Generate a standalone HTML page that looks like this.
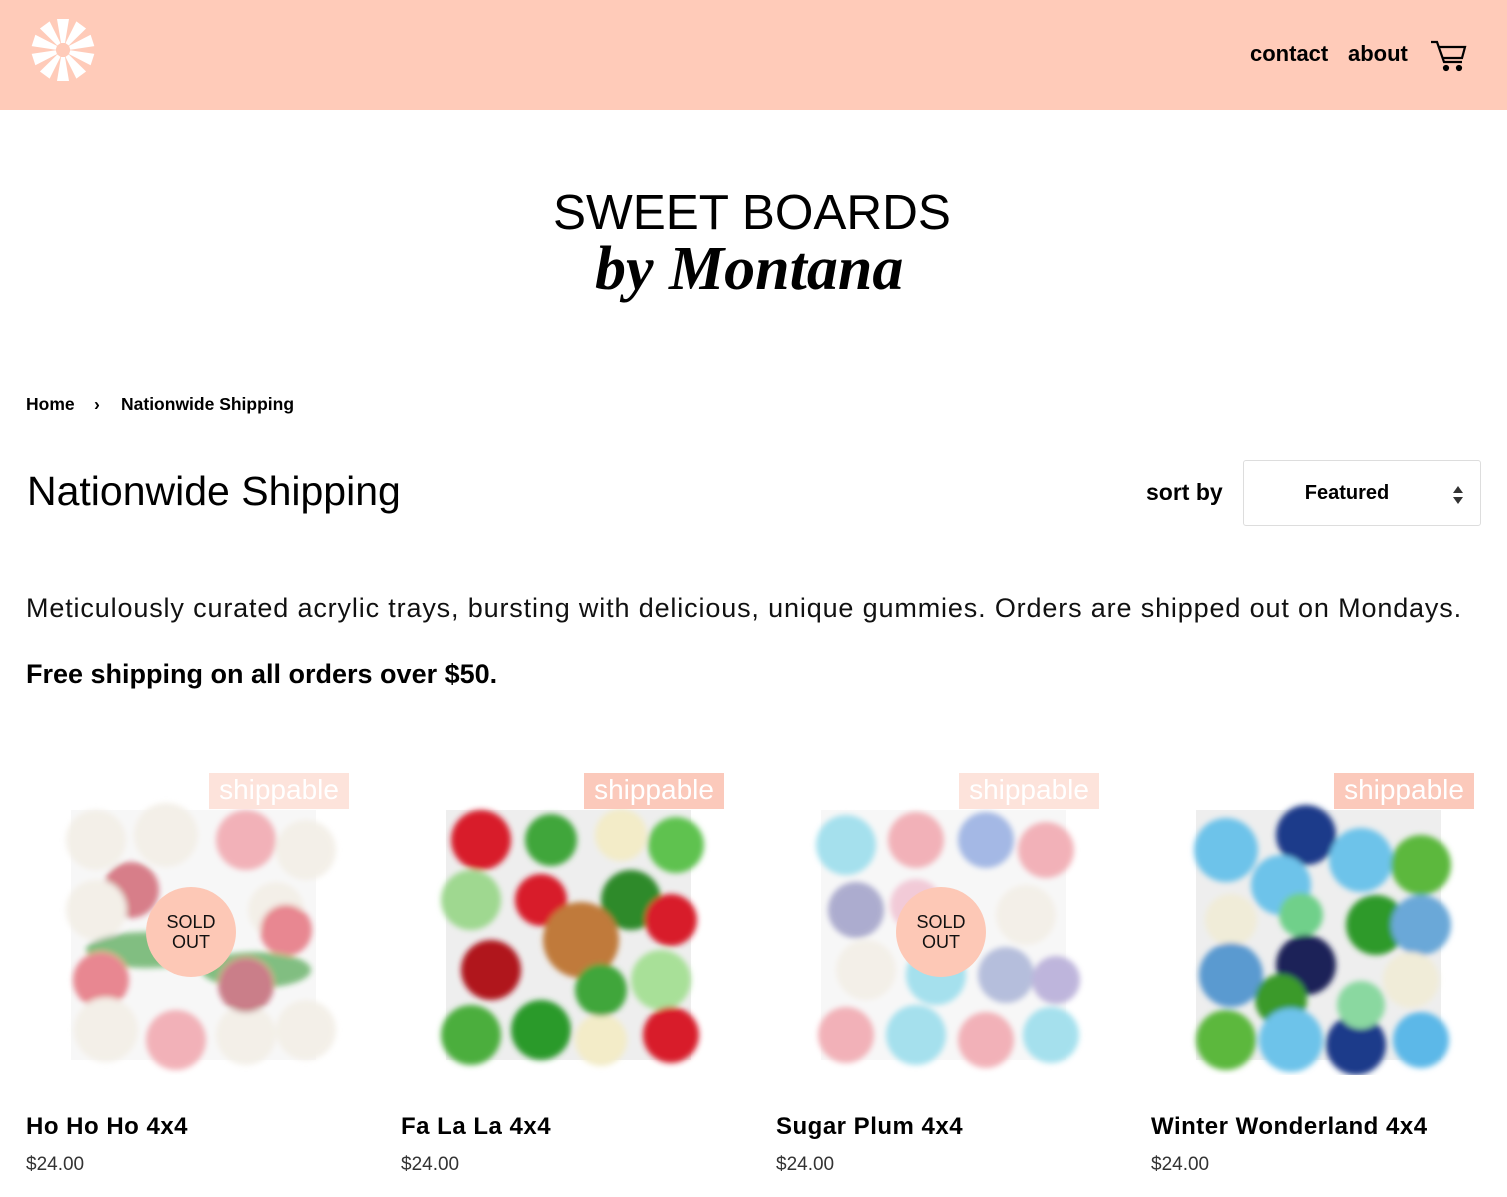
<!DOCTYPE html>
<html><head><meta charset="utf-8">
<style>
*{margin:0;padding:0;box-sizing:border-box}
body{width:1507px;height:1197px;overflow:hidden;background:#fff;font-family:"Liberation Sans",sans-serif;color:#000;position:relative}
.hdr{position:absolute;left:0;top:0;width:1507px;height:110px;background:#ffcbb9}
.nav{position:absolute;top:41px;font-weight:bold;font-size:22px}
.abs{position:absolute}
.crumb{top:394px;font-size:17.5px;font-weight:bold}
h1{position:absolute;left:27px;top:468px;font-weight:normal;font-size:41px;letter-spacing:0px}
.sel{position:absolute;left:1243px;top:460px;width:238px;height:66px;border:1px solid #ddd;border-radius:3px;font-weight:bold;font-size:20px;text-align:center;line-height:64px;padding-right:30px}
.desc{left:26px;top:593px;font-size:27px;letter-spacing:0.85px;color:#111;white-space:nowrap}
.free{left:26px;top:659px;font-size:27px;font-weight:bold;white-space:nowrap}
.prod{position:absolute;top:770px;width:340px;height:420px}
.ship{position:absolute;left:183px;top:3px;width:140px;height:36px;background:#fbc9bb;color:#fff;font-size:28px;line-height:34px;text-align:center}
.faded .ship{background:#fde3db}
.name{position:absolute;left:0;top:343px;font-size:24px;letter-spacing:0.5px;font-weight:bold;white-space:nowrap}
.price{position:absolute;left:0;top:384px;font-size:19px;color:#333}
.sold{position:absolute;left:120px;top:117px;width:90px;height:90px;border-radius:50%;background:#fdc8b6;font-size:18px;text-align:center;line-height:20px;padding-top:25px;color:#111}
svg.c{position:absolute;left:30px;top:20px}
</style></head><body>
<div class="hdr">
<svg class="abs" style="left:31px;top:18px" width="64" height="64" viewBox="-32 -32 64 64">
<g fill="#fff">
<polygon points="-2,-7 2,-7 6,-31 -6,-31"/>
<polygon points="-2,-7 2,-7 6,-31 -6,-31" transform="rotate(36)"/>
<polygon points="-2,-7 2,-7 6,-31 -6,-31" transform="rotate(72)"/>
<polygon points="-2,-7 2,-7 6,-31 -6,-31" transform="rotate(108)"/>
<polygon points="-2,-7 2,-7 6,-31 -6,-31" transform="rotate(144)"/>
<polygon points="-2,-7 2,-7 6,-31 -6,-31" transform="rotate(180)"/>
<polygon points="-2,-7 2,-7 6,-31 -6,-31" transform="rotate(216)"/>
<polygon points="-2,-7 2,-7 6,-31 -6,-31" transform="rotate(252)"/>
<polygon points="-2,-7 2,-7 6,-31 -6,-31" transform="rotate(288)"/>
<polygon points="-2,-7 2,-7 6,-31 -6,-31" transform="rotate(324)"/>
</g></svg>
<div class="nav" style="left:1250px">contact</div>
<div class="nav" style="left:1348px">about</div>
<svg class="abs" style="left:1430px;top:40px" width="38" height="32" viewBox="0 0 38 32" fill="none" stroke="#000" stroke-width="2.2">
<path d="M1 2h6l7 20h18"/><path d="M9 7h26l-3 11H13"/><circle cx="16" cy="28" r="2" fill="#000"/><circle cx="29" cy="28" r="2" fill="#000"/>
</svg>
</div>

<div class="abs" style="left:553px;top:184px;font-size:49.5px;white-space:nowrap">SWEET BOARDS</div>
<div class="abs" style="left:595px;top:234px;font-family:'Liberation Serif',serif;font-style:italic;font-weight:bold;font-size:62px;white-space:nowrap">by Montana</div>

<div class="abs crumb" style="left:26px">Home</div>
<div class="abs crumb" style="left:94px">›</div>
<div class="abs crumb" style="left:121px">Nationwide Shipping</div>

<h1>Nationwide Shipping</h1>
<div class="abs" style="left:1146px;top:479px;font-size:23px;font-weight:bold">sort by</div>
<div class="sel">Featured
<svg class="abs" style="left:207px;top:24px" width="14" height="20" viewBox="0 0 14 20"><path d="M7 1l5 7H2z M2 12h10l-5 7z" fill="#333"/></svg>
</div>

<div class="abs desc">Meticulously curated acrylic trays, bursting with delicious, unique gummies. Orders are shipped out on Mondays.</div>
<div class="abs free">Free shipping on all orders over $50.</div>

<defs></defs>
<!-- product 1 -->
<div class="prod faded" style="left:26px">
<svg class="c" width="290" height="285" viewBox="0 0 290 285" style="opacity:.55">
<defs><filter id="b"><feGaussianBlur stdDeviation="3"/></filter></defs>
<rect x="15" y="20" width="245" height="250" fill="#f2f2f2"/>
<g filter="url(#b)">
<circle cx="40" cy="50" r="30" fill="#eae3d6"/><circle cx="110" cy="45" r="32" fill="#eae3d6"/><circle cx="190" cy="50" r="30" fill="#e8737f"/><circle cx="250" cy="60" r="30" fill="#eae3d6"/>
<circle cx="75" cy="100" r="28" fill="#b8142a"/><circle cx="40" cy="120" r="30" fill="#eae3d6"/><circle cx="220" cy="120" r="28" fill="#eae3d6"/><circle cx="230" cy="140" r="26" fill="#d62839"/>
<ellipse cx="90" cy="160" rx="60" ry="18" fill="#1d8a1d"/><ellipse cx="200" cy="180" rx="55" ry="18" fill="#1d8a1d"/><circle cx="45" cy="190" r="28" fill="#d62839"/>
<circle cx="50" cy="240" r="32" fill="#eae3d6"/><circle cx="120" cy="250" r="30" fill="#e8737f"/><circle cx="190" cy="245" r="30" fill="#eae3d6"/><circle cx="250" cy="240" r="30" fill="#eae3d6"/><circle cx="190" cy="195" r="28" fill="#a0142a"/>
</g></svg>
<div class="ship">shippable</div>
<div class="sold">SOLD<br>OUT</div>
<div class="name">Ho Ho Ho 4x4</div><div class="price">$24.00</div>
</div>

<!-- product 2 -->
<div class="prod" style="left:401px">
<svg class="c" width="290" height="285" viewBox="0 0 290 285">
<defs><filter id="b2"><feGaussianBlur stdDeviation="3"/></filter></defs>
<rect x="15" y="20" width="245" height="250" fill="#eee"/>
<g filter="url(#b2)">
<circle cx="50" cy="50" r="30" fill="#d81e2c"/><circle cx="120" cy="50" r="26" fill="#3fa63a"/><circle cx="190" cy="45" r="26" fill="#f3ecc8"/><circle cx="245" cy="55" r="28" fill="#5fc24f"/>
<circle cx="40" cy="110" r="30" fill="#9fd890"/><circle cx="110" cy="110" r="26" fill="#d81e2c"/><circle cx="200" cy="110" r="30" fill="#2e8a2a"/><circle cx="240" cy="130" r="26" fill="#d81e2c"/>
<circle cx="150" cy="150" r="38" fill="#c07a3a"/><circle cx="60" cy="180" r="30" fill="#b0121f"/><circle cx="230" cy="190" r="30" fill="#a8e098"/>
<circle cx="40" cy="245" r="30" fill="#4cae3e"/><circle cx="110" cy="240" r="30" fill="#2c9a2a"/><circle cx="170" cy="250" r="26" fill="#f3ecc8"/><circle cx="240" cy="245" r="28" fill="#d81e2c"/><circle cx="170" cy="200" r="26" fill="#3fa63a"/>
</g></svg>
<div class="ship">shippable</div>
<div class="name">Fa La La 4x4</div><div class="price">$24.00</div>
</div>

<!-- product 3 -->
<div class="prod faded" style="left:776px">
<svg class="c" width="290" height="285" viewBox="0 0 290 285" style="opacity:.55">
<defs><filter id="b3"><feGaussianBlur stdDeviation="3"/></filter></defs>
<rect x="15" y="20" width="245" height="250" fill="#f2f2f2"/>
<g filter="url(#b3)">
<circle cx="40" cy="55" r="30" fill="#5cc8e0"/><circle cx="110" cy="50" r="28" fill="#e8737f"/><circle cx="180" cy="50" r="28" fill="#5a7fd0"/><circle cx="240" cy="60" r="28" fill="#e8737f"/>
<circle cx="50" cy="120" r="28" fill="#6a6aa8"/><circle cx="110" cy="115" r="26" fill="#e8a0b8"/><circle cx="220" cy="125" r="30" fill="#eae3d6"/>
<circle cx="60" cy="180" r="30" fill="#eae3d6"/><circle cx="130" cy="185" r="30" fill="#5cc8e0"/><circle cx="200" cy="185" r="28" fill="#7a8ac0"/><circle cx="250" cy="190" r="24" fill="#8a7ac0"/>
<circle cx="40" cy="245" r="28" fill="#e8737f"/><circle cx="110" cy="245" r="30" fill="#5cc8e0"/><circle cx="180" cy="250" r="28" fill="#e8737f"/><circle cx="245" cy="245" r="28" fill="#5cc8e0"/>
</g></svg>
<div class="ship">shippable</div>
<div class="sold">SOLD<br>OUT</div>
<div class="name">Sugar Plum 4x4</div><div class="price">$24.00</div>
</div>

<!-- product 4 -->
<div class="prod" style="left:1151px">
<svg class="c" width="290" height="285" viewBox="0 0 290 285">
<defs><filter id="b4"><feGaussianBlur stdDeviation="3"/></filter></defs>
<rect x="15" y="20" width="245" height="250" fill="#eee"/>
<g filter="url(#b4)">
<circle cx="45" cy="60" r="32" fill="#6dc3ea"/><circle cx="125" cy="45" r="30" fill="#1d3a8a"/><circle cx="180" cy="70" r="32" fill="#6dc3ea"/><circle cx="240" cy="75" r="30" fill="#5cb83c"/>
<circle cx="100" cy="95" r="30" fill="#6dc3ea"/><circle cx="50" cy="130" r="26" fill="#f0ecd8"/><circle cx="120" cy="125" r="22" fill="#6fd08a"/><circle cx="195" cy="135" r="30" fill="#2e9a2a"/><circle cx="240" cy="135" r="30" fill="#6aa8d8"/>
<circle cx="50" cy="185" r="32" fill="#5a9ad0"/><circle cx="125" cy="175" r="30" fill="#1a2458"/><circle cx="100" cy="210" r="26" fill="#3a9a2a"/><circle cx="230" cy="190" r="28" fill="#f0ecd8"/>
<circle cx="45" cy="250" r="30" fill="#5cb83c"/><circle cx="110" cy="250" r="32" fill="#6dc3ea"/><circle cx="175" cy="255" r="30" fill="#1d3a8a"/><circle cx="180" cy="215" r="24" fill="#8ad8a0"/><circle cx="240" cy="250" r="28" fill="#5cb8e8"/>
</g></svg>
<div class="ship">shippable</div>
<div class="name">Winter Wonderland 4x4</div><div class="price">$24.00</div>
</div>
</body></html>
